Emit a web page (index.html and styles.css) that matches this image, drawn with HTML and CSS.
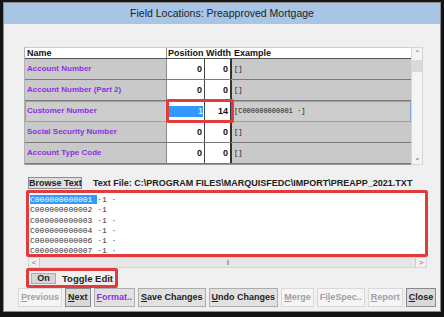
FILE: index.html
```html
<!DOCTYPE html>
<html>
	<head>
		<meta charset="utf-8" />
		<title>Field Locations</title>
		<link rel="stylesheet" href="styles.css">
	</head>
	<body>
		<div class="window">
			<div class="titlebar">Field Locations: Preapproved Mortgage</div>
			<div class="content">
				<div class="gridbox">
					<div class="grid">
						<div class="row head">
							<div class="cell name">Name</div>
							<div class="cell pos">Position</div>
							<div class="cell wid">Width</div>
							<div class="cell ex">Example</div>
						</div>
						<div class="row">
							<div class="cell name field">Account Number</div>
							<div class="cell pos num">0</div>
							<div class="cell wid num">0</div>
							<div class="cell ex">[]</div>
						</div>
						<div class="row">
							<div class="cell name field">Account Number (Part 2)</div>
							<div class="cell pos num">0</div>
							<div class="cell wid num">0</div>
							<div class="cell ex">[]</div>
						</div>
						<div class="row current">
							<div class="cell name field">Customer Number</div>
							<div class="cell pos num"><span class="editsel">1</span></div>
							<div class="cell wid num">14</div>
							<div class="cell ex">[C000000000001 ·]</div>
							<div class="mark"></div>
						</div>
						<div class="row">
							<div class="cell name field">Social Security Number</div>
							<div class="cell pos num">0</div>
							<div class="cell wid num">0</div>
							<div class="cell ex">[]</div>
						</div>
						<div class="row">
							<div class="cell name field">Account Type Code</div>
							<div class="cell pos num">0</div>
							<div class="cell wid num">0</div>
							<div class="cell ex">[]</div>
						</div>
					</div>
					<div class="vscroll">
						<div class="arrow">&#8963;</div>
						<div class="thumb"></div>
						<div class="track"></div>
						<div class="arrow">&#8964;</div>
					</div>
				</div>

				<div class="filebar">
					<div class="btn small">Browse Text</div>
					<div class="filename">Text File: C:\PROGRAM FILES\MARQUISFEDC\IMPORT\PREAPP_2021.TXT</div>
				</div>

				<div class="textbox">
					<div class="lines">
						<div><span class="hl">C000000000001 </span>·1 ·</div>
						<div>C000000000002 ·1</div>
						<div>C000000000003 ·1 ·</div>
						<div>C000000000004 ·1 ·</div>
						<div>C000000000006 ·1 ·</div>
						<div>C000000000007 ·1 ·</div>
					</div>
				</div>
				<div class="hscroll">
					<div class="harrow">&lt;</div>
					<div class="hthumb">|||</div>
					<div class="harrow">&gt;</div>
				</div>

				<div class="togglebox">
					<div class="btn on">On</div>
					<div class="togglelabel">Toggle Edit</div>
				</div>
			</div>
			<div class="buttons">
				<div class="btn off"><u>P</u>revious</div>
				<div class="btn pressed"><u>N</u>ext</div>
				<div class="btn purple"><u>F</u>ormat..</div>
				<div class="btn"><u>S</u>ave Changes</div>
				<div class="btn"><u>U</u>ndo Changes</div>
				<div class="btn off"><u>M</u>erge</div>
				<div class="btn off">Fi<u>l</u>eSpec..</div>
				<div class="btn off"><u>R</u>eport</div>
				<div class="btn pressed"><u>C</u>lose</div>
			</div>
		</div>
	</body>
</html>
```

FILE: styles.css
```css
*{
	margin: 0;
	padding: 0;
	box-sizing: border-box;
}
body{
	background: #141414;
	font-family: "Liberation Sans", Arial, sans-serif;
	color: #111;
}
.window{
	width: 438px;
	height: 310px;
	margin: 2px 3px 5px 3px;
	background: #f0f0f0;
	border: 1px solid #8c8c8c;
	display: flex;
	flex-direction: column;
}
.titlebar{
	height: 21px;
	line-height: 21px;
	background: #a9c5e6;
	text-align: center;
	font-size: 10.5px;
	color: #222;
}
.content{
	padding: 23px 0 0 18px;
	flex: 1;
}
.gridbox{
	display: flex;
	width: 401px;
	margin-left: 2px;
}
.grid{
	width: 387px;
	border-left: 1px solid #b0b0b0;
	border-bottom: 1px solid #9a9a9a;
}
.row{
	display: flex;
	height: 21px;
	border-bottom: 1px solid #7a7a7a;
	position: relative;
}
.row.head{
	height: 12px;
	background: #fff;
	border-bottom: 1px solid #555;
	border-top: 1px solid #ccc;
}
.cell{
	font-size: 8px;
	line-height: 20px;
	padding: 0 2px;
	white-space: nowrap;
	overflow: hidden;
}
.head .cell{
	font-family: "Liberation Sans", Arial, sans-serif;
	font-size: 9px;
	font-weight: bold;
	line-height: 11px;
	background: #fff;
}
.name{
	width: 142px;
	background: #c9c9c9;
	border-right: 1px solid #8a8a8a;
}
.pos{
	width: 38px;
	background: #fff;
	border-right: 1px solid #444;
}
.wid{
	width: 27px;
	background: #fff;
	border-right: 2px solid #333;
}
.ex{
	flex: 1;
	background: #c9c9c9;
	font-size: 7px;
	font-family: "Liberation Mono", monospace;
}
.head .pos,.head .wid{
	border-right: 0;
	padding: 0 1px;
}
.field{
	color: #8c2fe6;
	font-weight: bold;
}
.num{
	text-align: right;
	font-weight: bold;
	font-size: 9px;
}
.row.current{
	outline: 1px solid #7fa6d8;
	outline-offset: -1px;
	z-index: 1;
}
.row.current .name, .row.current .ex{
	background: #cdcdcd;
}
.editsel{
	display: block;
	margin: 5px -1px 0 0;
	height: 11px;
	line-height: 11px;
	background: #3399ff;
	color: #fff;
	font-weight: normal;
}
.mark{
	position: absolute;
	left: 141px;
	top: -2px;
	width: 68px;
	height: 24px;
	border: 3px solid #e23b3e;
	border-radius: 2px;
}
.vscroll{
	width: 12px;
	border: 1px solid #d6d6d6;
	background: #f4f4f4;
	display: flex;
	flex-direction: column;
}
.arrow{
	height: 12px;
	font-size: 8px;
	line-height: 12px;
	text-align: center;
	color: #777;
}
.thumb{
	height: 12px;
	background: #dadada;
}
.track{
	flex: 1;
}
.filebar{
	display: flex;
	align-items: center;
	margin: 12px 0 0 6px;
	height: 12px;
}
.btn{
	border: 1px solid #adadad;
	background: #e1e1e1;
	font-size: 9px;
	font-weight: bold;
	color: #222;
	text-align: center;
	white-space: nowrap;
}
.btn u{
	text-decoration: underline;
}
.btn.small{
	width: 54px;
	height: 12px;
	line-height: 10px;
	font-size: 9px;
	background: #dedede;
	border-color: #8e8e8e;
}
.filename{
	margin-left: 11px;
	font-size: 9px;
	font-weight: bold;
	color: #222;
	white-space: nowrap;
}
.textbox{
	margin: 1px 0 0 4px;
	width: 402px;
	height: 67px;
	border: 3px solid #e23b3e;
	border-radius: 2px;
	background: #fff;
}
.lines{
	padding: 2px 0 0 1px;
	font-family: "Liberation Mono", monospace;
	font-size: 8px;
	line-height: 10.3px;
	color: #333;
}
.hl{
	background: #3399ff;
	color: #fff;
}
.hscroll{
	display: flex;
	margin-left: 6px;
	width: 399px;
	height: 11px;
	border: 1px solid #d6d6d6;
	background: #f0f0f0;
}
.harrow{
	width: 10px;
	font-size: 8px;
	line-height: 9px;
	text-align: center;
	color: #777;
}
.hthumb{
	flex: 1;
	background: #e6e6e6;
	border-left: 1px solid #ccc;
	border-right: 1px solid #ccc;
	font-size: 6px;
	line-height: 9px;
	text-align: center;
	color: #888;
	letter-spacing: -1px;
}
.togglebox{
	display: flex;
	align-items: center;
	margin-left: 4px;
	width: 92px;
	height: 20px;
	border: 3px solid #e23b3e;
	border-radius: 2px;
}
.btn.on{
	width: 25px;
	height: 11px;
	line-height: 9px;
	margin-left: 2px;
	background: #d6d6d6;
}
.togglelabel{
	margin-left: 6px;
	font-size: 9.5px;
	font-weight: bold;
	color: #222;
}
.buttons{
	display: flex;
	gap: 3px;
	padding: 0 0 5px 14px;
	height: 25px;
}
.buttons .btn{
	height: 19px;
	line-height: 17px;
	padding: 0 2px;
}
.btn.off{
	background: #f5f5f5;
	border-color: #d8d8d8;
	color: #a0a0a0;
}
.btn.pressed{
	background: #d9d9d9;
	border-color: #8a8a8a;
}
.btn.purple{
	color: #8c2fe6;
}
```
